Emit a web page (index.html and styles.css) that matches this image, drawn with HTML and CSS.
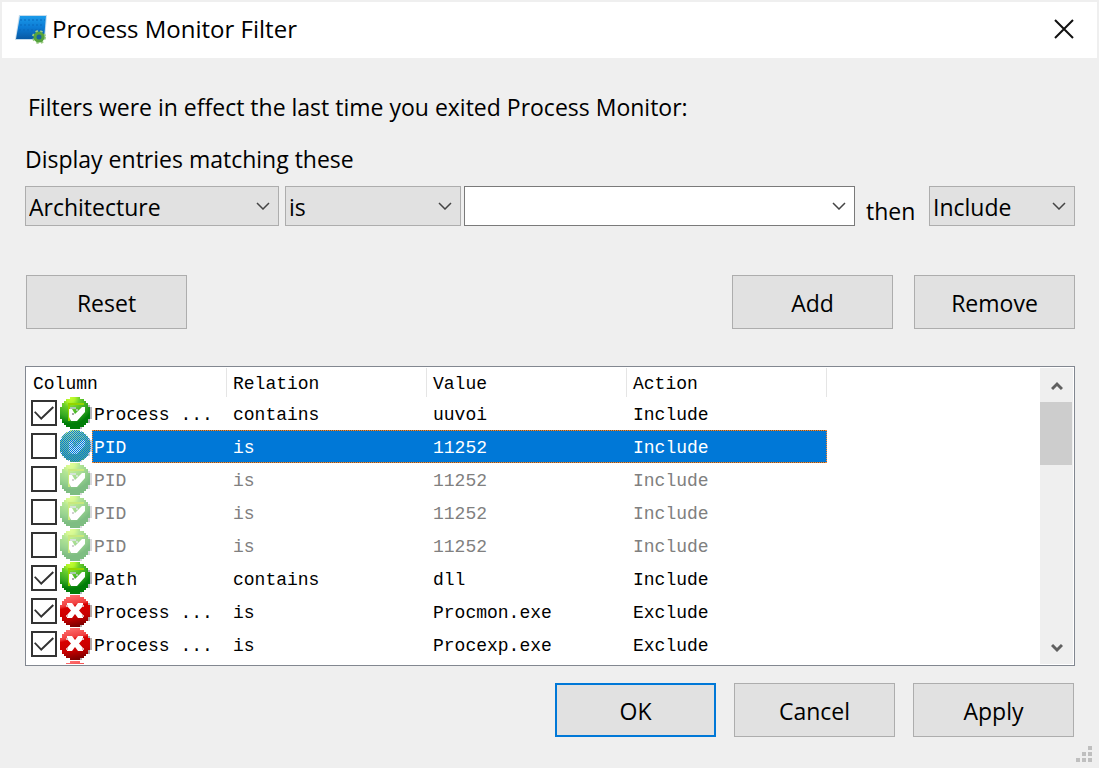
FILE: index.html
```html
<!DOCTYPE html>
<html lang="en">
<head>
<meta charset="utf-8">
<title>Process Monitor Filter</title>
<link rel="stylesheet" href="styles.css">
</head>
<body>
<svg class="defs" aria-hidden="true">
  <defs>
    <linearGradient id="screen" x1="0" y1="0" x2="0" y2="1"><stop offset="0" stop-color="#1b9bea"/><stop offset="0.5" stop-color="#0c7bd4"/><stop offset="1" stop-color="#0759a4"/></linearGradient>
    <radialGradient id="green" cx="0.35" cy="0.02" r="1"><stop offset="0" stop-color="#c4ff32"/><stop offset="0.15" stop-color="#b0f428"/><stop offset="0.3" stop-color="#6cd02c"/><stop offset="0.6" stop-color="#35a822"/><stop offset="0.82" stop-color="#007d08"/></radialGradient>
    <linearGradient id="red" x1="0.3" y1="0" x2="0.5" y2="1"><stop offset="0" stop-color="#ff7070"/><stop offset="0.3" stop-color="#f04040"/><stop offset="0.38" stop-color="#d80000"/><stop offset="0.7" stop-color="#c80000"/><stop offset="1" stop-color="#780000"/></linearGradient>
    <pattern id="dither" width="2" height="2" patternUnits="userSpaceOnUse"><path d="M0 0h1v1H0zM1 1h1v1H1z" fill="#0078d7"/></pattern>
    <path id="disc" d="M5 0h5v1h2v1h1v1h1v2h1v6h-1v2h-1v1h-1v1h-2v1H5v-1H3v-1H2v-1H1v-2H0V5h1V3h1V2h1V1h2z"/>
    <symbol id="yes" viewBox="0 0 16 16">
      <path d="M14 4h1v1h1v6h-1v2h-2v1h-2v2H6v-1h4l4-4z" fill="#b4b4bc"/>
      <use href="#disc" fill="url(#green)"/>
      <path d="M4 3h8v1H5v8H4z" fill="#93d500"/>
      <path d="M4.500 6h1.500l1.500 2.500L11 5h1.500v2.500L8.500 12H5.500L4.500 10z" fill="#fff"/>
      <path d="M5 5h3v1H5zM8 6h1v1H8z" fill="#a9c8b0"/>
      <path d="M6 8h1v1H6z" fill="#a5a5a5"/>
    </symbol>
    <symbol id="no" viewBox="0 0 16 16">
      <path d="M14 4h1v1h1v6h-1v2h-2v1h-2v2H6v-1h4l4-4z" fill="#b4aaaa"/>
      <use href="#disc" fill="url(#red)"/>
      <path d="M3.500 4H6l1.500 2L9 4h2.500v1.500L9.500 7.700l2 2.300v1.500H9L7.500 9.500 6 11.500H3.500V10l2-2.300-2-2.200z" fill="#fff"/>
      <path d="M3 5h1v1H3zM11 5h1v1h-1zM3 10h1v1H3zM11 10h1v1h-1z" fill="#e4b4b4"/>
    </symbol>
  </defs>
</svg>
<main class="dialog">
  <header class="titlebar">
    <svg class="app-icon" viewBox="0 0 32 32" aria-hidden="true">
      <path d="M4 2h28l-2 25H0z" fill="#c5dced"/>
      <path d="M5 3h26l-2 23H1z" fill="url(#screen)"/>
      <path d="M5 7h25M5 12h24M4 17h24" stroke="#0869bd" stroke-dasharray="2 2"/>
      <circle cx="24" cy="24" r="5" fill="none" stroke="#9ccb86" stroke-width="4" stroke-dasharray="2 2"/>
      <circle cx="24" cy="24" r="4" fill="#17649b" stroke="#55a33c" stroke-width="3"/>
    </svg>
    <h1 class="title">Process Monitor Filter</h1>
    <button class="close" type="button" aria-label="Close"><svg viewBox="0 0 20 20"><path d="M1 1l18 18M19 1L1 19" fill="none" stroke="#111" stroke-width="2"/></svg></button>
  </header>
  <form class="body">
    <p class="notice">Filters were in effect the last time you exited Process Monitor:</p>
    <p class="prompt">Display entries matching these</p>
    <div class="rule">
      <div class="combo combo-column"><select aria-label="Column"><option>Architecture</option></select><svg class="chevron" viewBox="0 0 14 8"><path d="M1 1l6 6 6-6"/></svg></div>
      <div class="combo combo-relation"><select aria-label="Relation"><option>is</option></select><svg class="chevron" viewBox="0 0 14 8"><path d="M1 1l6 6 6-6"/></svg></div>
      <div class="combo combo-value"><input type="text" aria-label="Value"><svg class="chevron" viewBox="0 0 14 8"><path d="M1 1l6 6 6-6"/></svg></div>
      <label class="then" for="action">then</label>
      <div class="combo combo-action"><select id="action"><option>Include</option></select><svg class="chevron" viewBox="0 0 14 8"><path d="M1 1l6 6 6-6"/></svg></div>
    </div>
    <div class="edit-actions">
      <button class="btn" type="button">Reset</button>
      <button class="btn btn-add" type="button">Add</button>
      <button class="btn" type="button">Remove</button>
    </div>
    <div class="list">
      <div class="list-view">
        <table class="filters">
          <colgroup><col class="col-icons"><col class="col-name"><col class="col-data"><col class="col-data"><col class="col-data"></colgroup>
          <thead><tr><th colspan="2">Column</th><th>Relation</th><th>Value</th><th>Action</th></tr></thead>
          <tbody>
            <tr><td><div class="marks"><input type="checkbox" aria-label="Process contains uuvoi" checked><svg class="mark"><use href="#yes"/></svg></div></td><td>Process ...</td><td>contains</td><td>uuvoi</td><td>Include</td></tr>
            <tr class="selected"><td><div class="marks"><input type="checkbox" aria-label="PID is 11252, first"><svg class="mark" viewBox="0 0 32 32"><use href="#yes" opacity="0.6"/><circle cx="15" cy="16" r="15" fill="#4aa8e0" opacity="0.3"/><circle cx="15" cy="16" r="16" fill="url(#dither)"/></svg></div></td><td>PID</td><td>is</td><td>11252</td><td>Include</td></tr>
            <tr class="off"><td><div class="marks"><input type="checkbox" aria-label="PID is 11252, second"><svg class="mark"><use href="#yes"/></svg></div></td><td>PID</td><td>is</td><td>11252</td><td>Include</td></tr>
            <tr class="off"><td><div class="marks"><input type="checkbox" aria-label="PID is 11252, third"><svg class="mark"><use href="#yes"/></svg></div></td><td>PID</td><td>is</td><td>11252</td><td>Include</td></tr>
            <tr class="off"><td><div class="marks"><input type="checkbox" aria-label="PID is 11252, fourth"><svg class="mark"><use href="#yes"/></svg></div></td><td>PID</td><td>is</td><td>11252</td><td>Include</td></tr>
            <tr><td><div class="marks"><input type="checkbox" aria-label="Path contains dll" checked><svg class="mark"><use href="#yes"/></svg></div></td><td>Path</td><td>contains</td><td>dll</td><td>Include</td></tr>
            <tr><td><div class="marks"><input type="checkbox" aria-label="Process is Procmon.exe" checked><svg class="mark"><use href="#no"/></svg></div></td><td>Process ...</td><td>is</td><td>Procmon.exe</td><td>Exclude</td></tr>
            <tr><td><div class="marks"><input type="checkbox" aria-label="Process is Procexp.exe" checked><svg class="mark"><use href="#no"/></svg></div></td><td>Process ...</td><td>is</td><td>Procexp.exe</td><td>Exclude</td></tr>
            <tr><td><div class="marks marks-last"><svg class="mark"><use href="#no"/></svg></div></td><td></td><td></td><td></td><td></td></tr>
          </tbody>
        </table>
      </div>
      <div class="scrollbar">
        <button class="scroll-btn" type="button" aria-label="Scroll up"><svg viewBox="0 0 12 10"><path d="M1 8l5-5 5 5"/></svg></button>
        <div class="thumb"></div>
        <button class="scroll-btn scroll-down" type="button" aria-label="Scroll down"><svg viewBox="0 0 12 10"><path d="M1 2l5 5 5-5"/></svg></button>
      </div>
    </div>
    <div class="dialog-actions">
      <button class="btn btn-default" type="submit">OK</button>
      <button class="btn" type="button">Cancel</button>
      <button class="btn" type="button">Apply</button>
    </div>
  </form>
  <svg class="grip" viewBox="0 0 16 16" aria-hidden="true"><path d="M12 0h4v4h-4zM6 6h4v4H6zM12 6h4v4h-4zM0 12h4v4H0zM6 12h4v4H6zM12 12h4v4h-4z" fill="#bfbfbf"/></svg>
</main>
</body>
</html>
```

FILE: styles.css
```css
* { box-sizing: border-box; }
body {
  margin: 0;
  background: #efefef;
  color: #000;
  font: 23px/32px "Open Sans", "Noto Sans", sans-serif;
}
button, input, select { font: inherit; color: inherit; margin: 0; border-radius: 0; }
.defs { position: absolute; width: 0; height: 0; }
.dialog {
  position: relative;
  display: flex;
  flex-direction: column;
  min-height: 100vh;
  border: 2px solid #efefef;
  border-bottom: 0;
}
.titlebar {
  display: flex;
  align-items: center;
  height: 56px;
  padding: 0 23px 2px 13px;
  background: #fff;
}
.app-icon { width: 32px; height: 32px; margin-right: 5px; }
.title { flex: 1; margin: 0; font-size: 24px; font-weight: 400; }
.close { display: flex; padding: 0; border: 0; background: none; }
.close svg { width: 20px; height: 20px; }
.body { display: flex; flex: 1; flex-direction: column; padding: 33px 22px 31px 23px; }
.notice, .prompt { margin: 0; }
.notice { padding-left: 3px; }
.prompt { margin-top: 20px; }
.rule { display: flex; margin-top: 11px; }
.combo { position: relative; height: 40px; }
.combo select, .combo input {
  display: block;
  width: 100%;
  height: 40px;
  padding: 2px 32px 0 3px;
  border: 1px solid #adadad;
  background: #e1e1e1;
  appearance: none;
  outline: 0;
}
.combo input { border-color: #7a7a7a; background: #fff; }
.chevron {
  position: absolute;
  right: 9px;
  top: 16px;
  width: 14px;
  height: 8px;
  pointer-events: none;
}
.chevron path { fill: none; stroke: #444; stroke-width: 1.5; }
.combo-column { width: 254px; margin-right: 6px; }
.combo-relation { width: 176px; margin-right: 3px; }
.combo-value { flex: 1; }
.combo-action { width: 146px; }
.then { width: 74px; padding: 9px 0 0 11px; height: 40px; }
.edit-actions { display: flex; gap: 21px; margin-top: 49px; padding-left: 1px; }
.btn {
  width: 161px;
  height: 54px;
  padding: 2px 0 0;
  border: 1px solid #adadad;
  background: #e1e1e1;
}
.btn-add { margin-left: auto; }
.btn-default { border: 2px solid #0078d7; }
.list {
  display: flex;
  flex: 1;
  margin-top: 37px;
  padding: 1px;
  border: 1px solid #828790;
  background: #fff;
}
.list-view { flex: 1 1 0; min-width: 0; height: 296px; overflow: hidden; }
.filters {
  table-layout: fixed;
  width: 800px;
  border-spacing: 0;
  font: 18px/30px "Liberation Mono", monospace;
}
.col-icons { width: 65px; }
.col-name { width: 135px; }
.col-data { width: 200px; }
.filters th {
  height: 29px;
  padding: 3px 0 0 6px;
  border-right: 1px solid #e5e5e5;
  font-weight: 400;
  text-align: left;
  line-height: 26px;
}
.filters td { height: 33px; padding: 4px 0 0 6px; line-height: 29px; white-space: nowrap; }
.filters td:first-child { padding: 0 0 0 4px; }
.filters td:nth-child(2) { padding-left: 2px; }
.marks { display: flex; gap: 3px; height: 33px; }
.marks-last { padding-left: 29px; }
.marks input {
  display: grid;
  place-items: center;
  flex: none;
  width: 26px;
  height: 26px;
  margin-top: 3px;
  border: 2px solid #333;
  background: #fff;
  appearance: none;
}
.marks input:checked::before {
  content: "";
  width: 20px;
  height: 14px;
  background: #333;
  clip-path: polygon(0 44%, 7% 37%, 36% 80%, 93% 2%, 100% 12%, 36% 100%);
}
.mark { flex: none; width: 32px; height: 32px; }
.off { color: #808080; }
.off .mark { opacity: 0.5; }
.selected { color: #fff; }
.selected td:not(:first-child) {
  background: linear-gradient(90deg, #ff8728 50%, #5a5a50 50%) top left / 2px 1px repeat-x,
    linear-gradient(90deg, #ff8728 50%, #5a5a50 50%) bottom left / 2px 1px repeat-x,
    #0078d7;
}
.selected td:nth-child(2) { border-left: 1px dotted #ff8728; padding-left: 1px; }
.selected td:last-child { border-right: 1px dotted #ff8728; }
.scrollbar { display: flex; flex-direction: column; width: 33px; background: #efefef; }
.scroll-btn { display: flex; align-items: center; justify-content: center; height: 34px; padding: 2px 0 0; border: 0; background: none; }
.scroll-btn svg { width: 12px; height: 10px; }
.scroll-btn path { fill: none; stroke: #606060; stroke-width: 3; }
.scroll-down { margin-top: auto; }
.thumb { width: 32px; height: 63px; background: #cdcdcd; }
.dialog-actions { display: flex; justify-content: flex-end; gap: 18px; margin-top: 17px; padding-right: 1px; }
.grip { position: absolute; right: 5px; bottom: 6px; width: 16px; height: 16px; }
```
